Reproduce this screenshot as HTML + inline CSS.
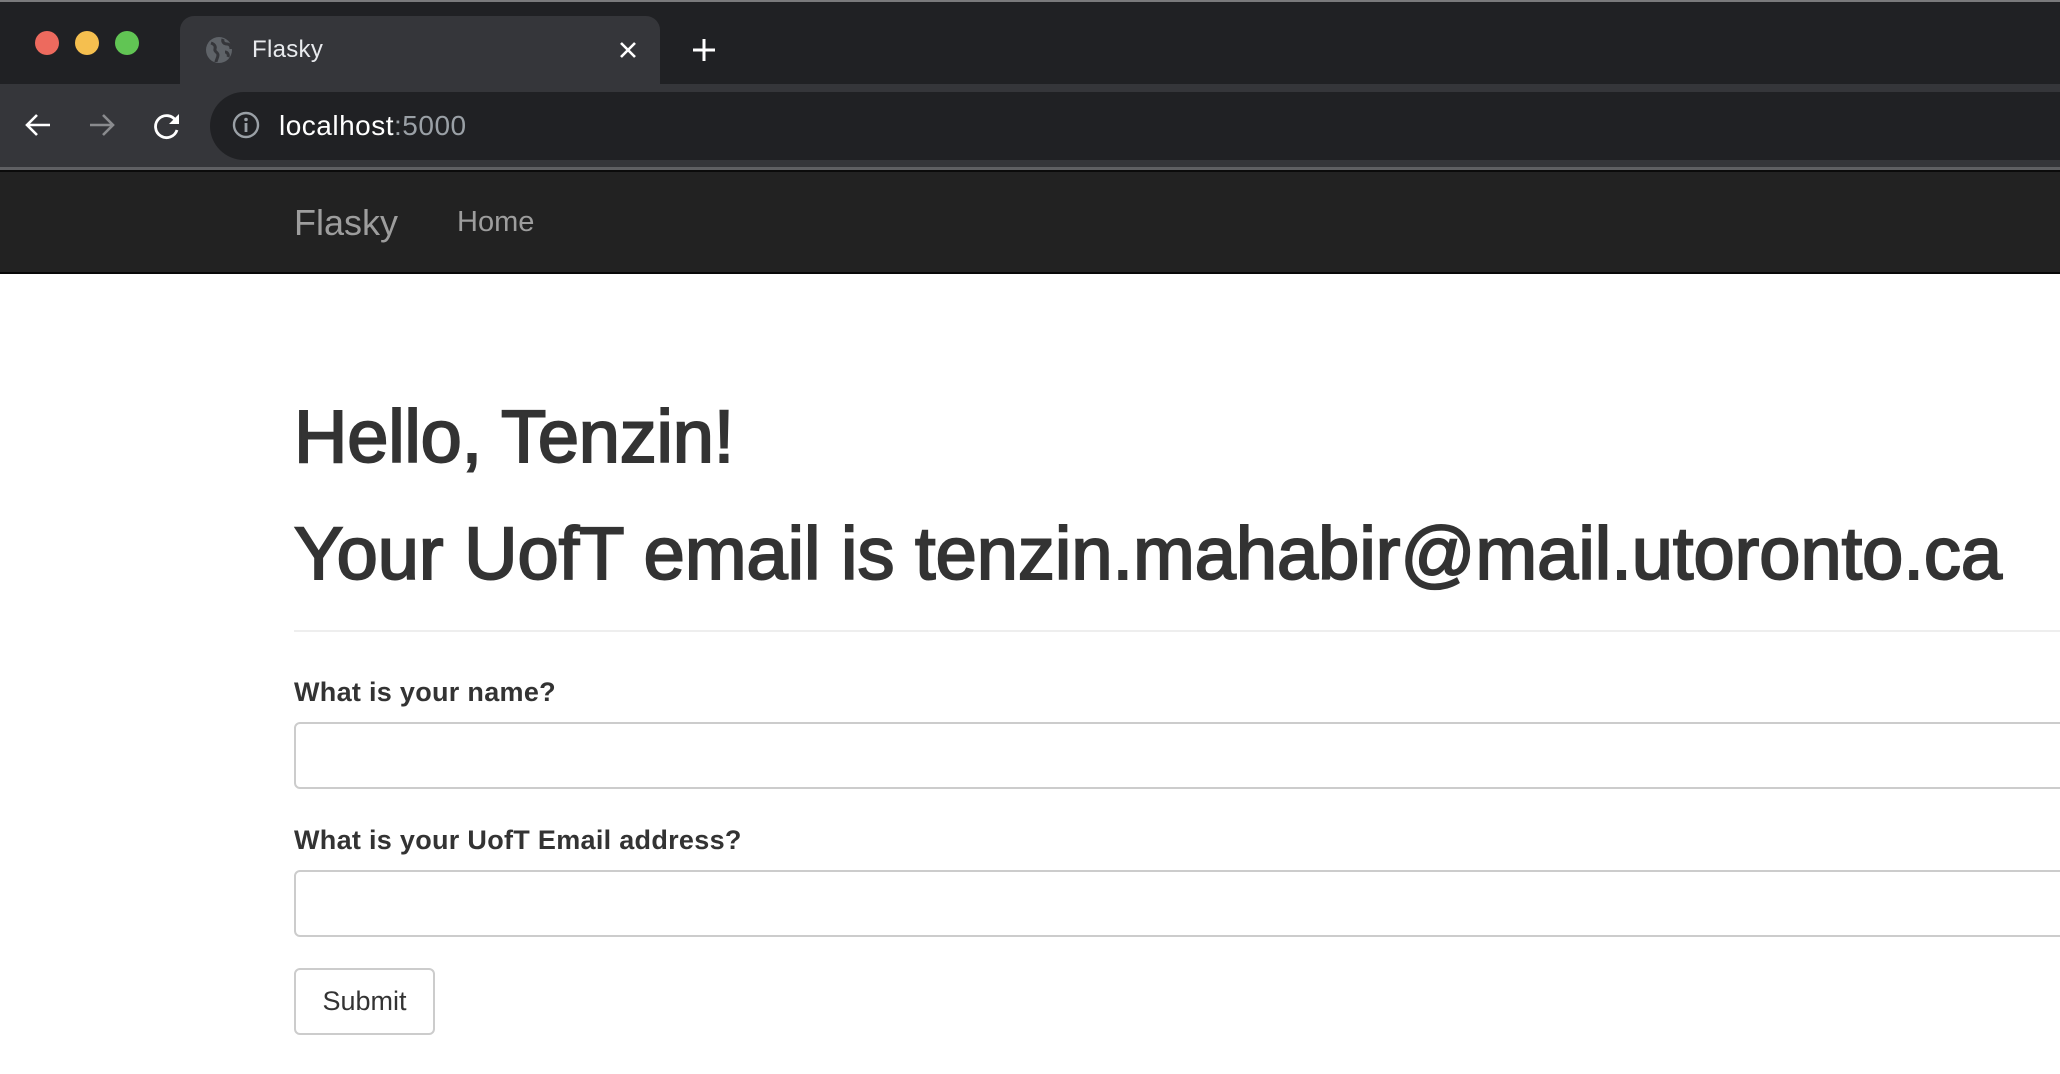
<!DOCTYPE html>
<html><head><meta charset="utf-8"><style>
*{margin:0;padding:0;box-sizing:border-box}
body{width:2060px;height:1074px;overflow:hidden;background:#fff;font-family:"Liberation Sans",Helvetica,Arial,sans-serif;position:relative}
.a{position:absolute;white-space:nowrap}
</style></head><body>
<div class="a" style="left:0;top:0;width:2060px;height:84px;background:#202124;border-top:2px solid #7a7a7c"></div>
<div class="a" style="left:47px;top:43px;width:24px;height:24px;margin:-12px;border-radius:50%;background:#ed6a5e"></div>
<div class="a" style="left:87px;top:43px;width:24px;height:24px;margin:-12px;border-radius:50%;background:#f5bf4f"></div>
<div class="a" style="left:127px;top:43px;width:24px;height:24px;margin:-12px;border-radius:50%;background:#61c554"></div>
<div class="a" style="left:180px;top:16px;width:480px;height:70px;background:#35363a;border-radius:14px 14px 0 0"></div>
<svg class="a" style="left:205px;top:36px" width="28" height="28" viewBox="0 0 28 28"><circle cx="14" cy="14" r="13" fill="#5f6368"/><path d="M6 7c3 1 5 3 4 6s3 3 3 6-2 5-2 7M18 3c-1 3 1 5 4 5s4 3 4 5M20 16c2 0 4 2 3 5" stroke="#35363a" stroke-width="3" fill="none"/></svg>
<div class="a" style="left:252px;top:38px;font-size:24px;line-height:24px;color:#e8eaed;letter-spacing:0.3px">Flasky</div>
<svg class="a" style="left:618px;top:40px" width="20" height="20" viewBox="0 0 20 20"><path d="M3 3L17 17M17 3L3 17" stroke="#fff" stroke-width="2.6"/></svg>
<svg class="a" style="left:692px;top:38px" width="24" height="24" viewBox="0 0 24 24"><path d="M12 1V23M1 12H23" stroke="#fff" stroke-width="3"/></svg>
<div class="a" style="left:0;top:84px;width:2060px;height:84px;background:#35363a"></div>
<svg class="a" style="left:24px;top:111px" width="28" height="28" viewBox="0 0 28 28"><path d="M26 14H3M13 4L3 14L13 24" stroke="#fff" stroke-width="2.6" fill="none"/></svg>
<svg class="a" style="left:88px;top:111px" width="28" height="28" viewBox="0 0 28 28"><path d="M2 14H25M15 4L25 14L15 24" stroke="#8a8b8e" stroke-width="2.6" fill="none"/></svg>
<svg class="a" style="left:152px;top:111px" width="30" height="30" viewBox="0 0 30 30"><path d="M24 10A11 11 0 1 0 25 19" stroke="#fff" stroke-width="2.8" fill="none"/><path d="M27 3V13H17Z" fill="#fff"/></svg>
<div class="a" style="left:210px;top:92px;width:1900px;height:68px;background:#202124;border-radius:34px"></div>
<svg class="a" style="left:232px;top:111px" width="28" height="28" viewBox="0 0 28 28"><circle cx="14" cy="14" r="12" stroke="#9aa0a6" stroke-width="2.4" fill="none"/><rect x="12.6" y="12" width="2.8" height="9" fill="#9aa0a6"/><circle cx="14" cy="8.5" r="1.8" fill="#9aa0a6"/></svg>
<div class="a" style="left:279px;top:112px;font-size:28px;line-height:28px;color:#fff;letter-spacing:0.5px">localhost<span style="color:#9aa0a6">:5000</span></div>
<div class="a" style="left:0;top:167px;width:2060px;height:3px;background:#5f6063"></div>
<div class="a" style="left:0;top:170px;width:2060px;height:2px;background:#0b0b0b"></div>
<div class="a" style="left:0;top:172px;width:2060px;height:100px;background:#222"></div>
<div class="a" style="left:0;top:272px;width:2060px;height:2px;background:#080808"></div>
<div class="a" style="left:294px;top:205px;font-size:36px;line-height:36px;color:#9d9d9d">Flasky</div>
<div class="a" style="left:457px;top:208px;font-size:29px;line-height:29px;color:#9d9d9d">Home</div>
<div class="a" style="left:294px;top:400px;font-size:74px;line-height:74px;color:#333;-webkit-text-stroke:2px #333;letter-spacing:-0.2px">Hello, Tenzin!</div>
<div class="a" style="left:294px;top:517px;font-size:74px;line-height:74px;color:#333;-webkit-text-stroke:2px #333;letter-spacing:0px">Your UofT email is tenzin.mahabir@mail.utoronto.ca</div>
<div class="a" style="left:294px;top:630px;width:1800px;height:2px;background:#eee"></div>
<div class="a" style="left:294px;top:679px;font-size:27px;line-height:27px;color:#333;font-weight:bold;letter-spacing:0.3px">What is your name?</div>
<div class="a" style="left:294px;top:722px;width:1800px;height:67px;border:2px solid #ccc;border-radius:6px"></div>
<div class="a" style="left:294px;top:827px;font-size:27px;line-height:27px;color:#333;font-weight:bold;letter-spacing:0.3px">What is your UofT Email address?</div>
<div class="a" style="left:294px;top:870px;width:1800px;height:67px;border:2px solid #ccc;border-radius:6px"></div>
<div class="a" style="left:294px;top:968px;width:141px;height:67px;border:2px solid #ccc;border-radius:6px;font-size:27px;line-height:63px;text-align:center;color:#333">Submit</div>
</body></html>
